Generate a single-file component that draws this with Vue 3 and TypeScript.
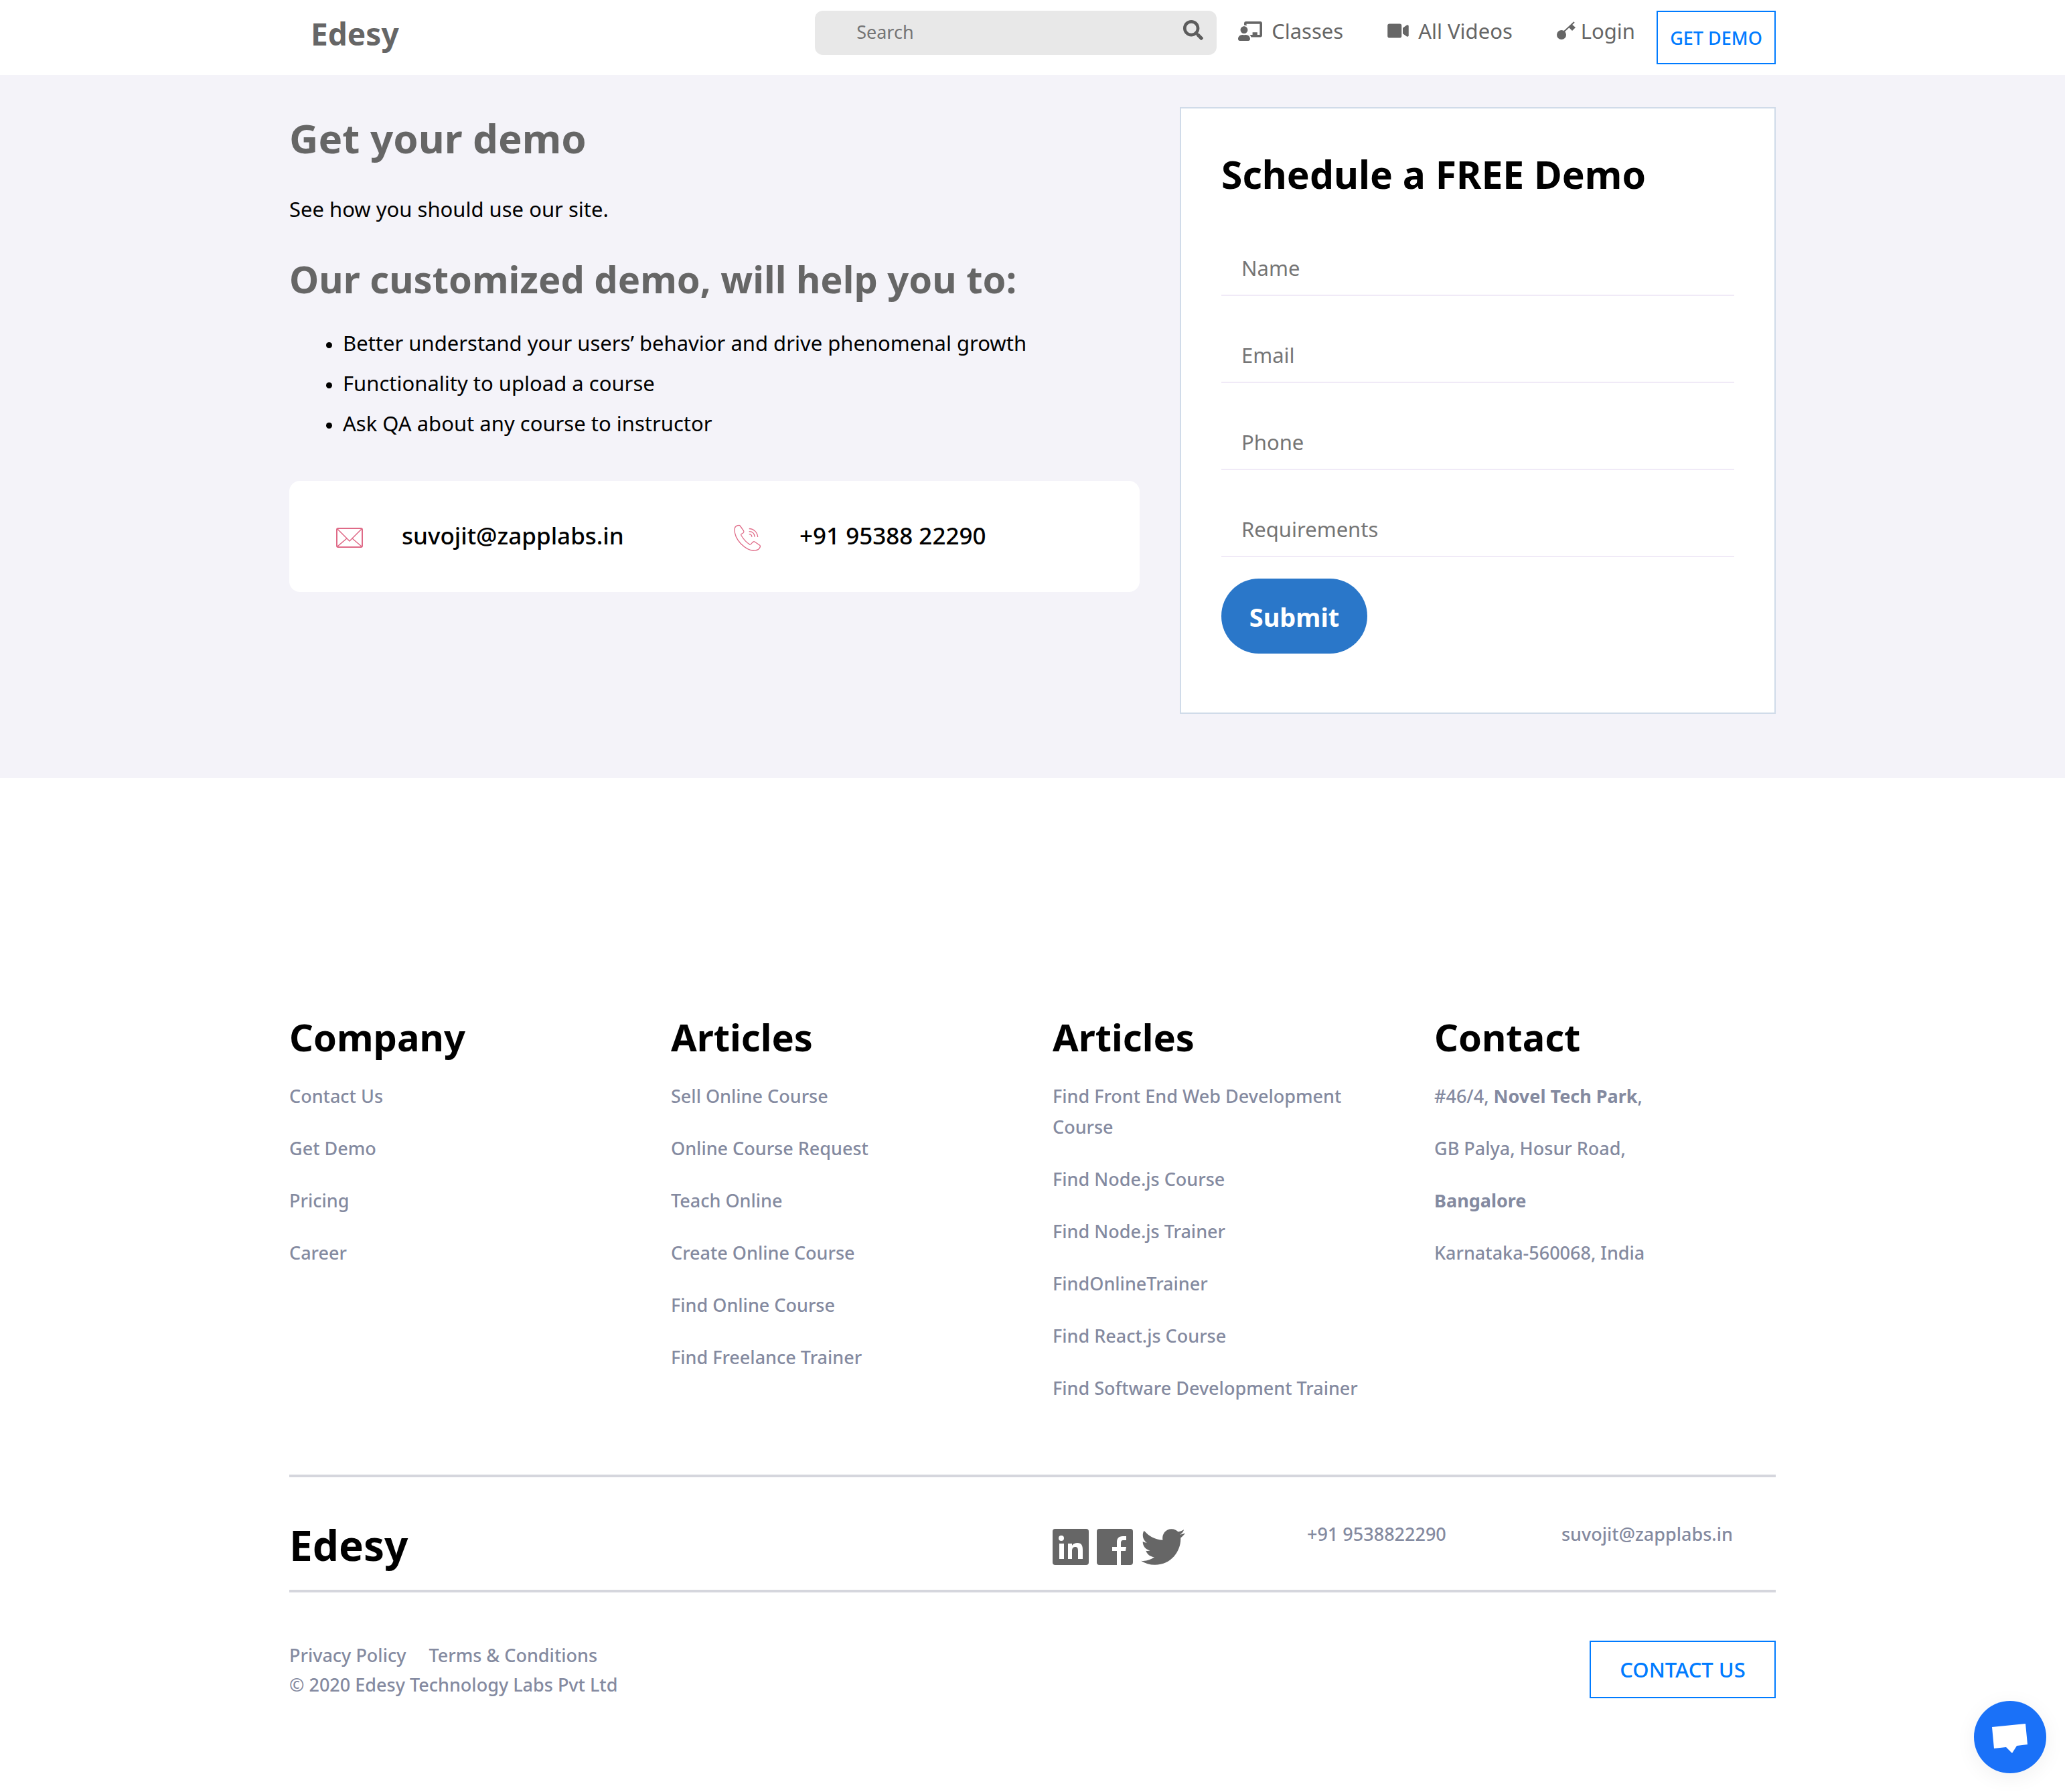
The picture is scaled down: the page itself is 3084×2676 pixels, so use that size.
<script setup lang="ts">
import { reactive, ref } from 'vue'

interface Field {
  key: 'name' | 'email' | 'phone' | 'requirements'
  label: string
  type: string
}

const search = ref('')
const form = reactive({ name: '', email: '', phone: '', requirements: '' })

const fields: Field[] = [
  { key: 'name', label: 'Name', type: 'text' },
  { key: 'email', label: 'Email', type: 'email' },
  { key: 'phone', label: 'Phone', type: 'tel' },
  { key: 'requirements', label: 'Requirements', type: 'text' },
]

const benefits: string[] = [
  'Better understand your users’ behavior and drive phenomenal growth',
  'Functionality to upload a course',
  'Ask QA about any course to instructor',
]

const linkColumns: { title: string; links: string[] }[] = [
  { title: 'Company', links: ['Contact Us', 'Get Demo', 'Pricing', 'Career'] },
  {
    title: 'Articles',
    links: [
      'Sell Online Course',
      'Online Course Request',
      'Teach Online',
      'Create Online Course',
      'Find Online Course',
      'Find Freelance Trainer',
    ],
  },
  {
    title: 'Articles',
    links: [
      'Find Front End Web Development Course',
      'Find Node.js Course',
      'Find Node.js Trainer',
      'FindOnlineTrainer',
      'Find React.js Course',
      'Find Software Development Trainer',
    ],
  },
]
</script>

<template>
  <div class="page">
    <header class="header">
      <div class="container header-row">
        <a class="brand" href="#">Edesy</a>
        <form class="search" role="search" @submit.prevent>
          <input v-model="search" type="text" placeholder="Search" aria-label="Search" />
          <button type="submit" aria-label="Search">
            <svg viewBox="0 0 512 512" width="30" height="30" fill="currentColor">
              <path d="M505 442.7L405.3 343c-4.5-4.500-10.6-7-17-7H372c27.600-35.300 44-79.700 44-128C416 93.100 322.900 0 208 0S0 93.100 0 208s93.100 208 208 208c48.300 0 92.700-16.400 128-44v16.300c0 6.400 2.500 12.500 7 17l99.700 99.700c9.400 9.400 24.600 9.400 33.900 0l28.300-28.300c9.400-9.400 9.400-24.600.1-34zM208 336c-70.700 0-128-57.200-128-128 0-70.700 57.200-128 128-128 70.700 0 128 57.200 128 128 0 70.700-57.200 128-128 128z" />
            </svg>
          </button>
        </form>
        <nav class="nav">
          <a href="#" class="nav-link">
            <svg viewBox="0 0 640 512" width="36" height="29" fill="currentColor">
              <path d="M208 352c-2.390 0-4.780.35-7.060 1.090C187.980 357.300 174.350 360 160 360c-14.350 0-27.980-2.700-40.950-6.910-2.280-.74-4.660-1.090-7.050-1.090C49.940 352-.33 402.480 0 464.620.14 490.880 21.730 512 48 512h224c26.270 0 47.860-21.120 48-47.380.33-62.140-49.940-112.620-112-112.620zm-48-32c53.020 0 96-42.980 96-96s-42.980-96-96-96-96 42.980-96 96 42.980 96 96 96zM592 0H208c-26.470 0-48 22.250-48 49.590V96c23.420 0 45.100 6.780 64 17.800V64h352v288h-64v-64H384v64h-76.240c19.100 16.690 33.120 38.730 39.690 64H592c26.470 0 48-22.250 48-49.590V49.590C640 22.250 618.470 0 592 0z" />
            </svg>
            Classes
          </a>
          <a href="#" class="nav-link">
            <svg viewBox="0 0 576 512" width="32" height="28" fill="currentColor">
              <path d="M336.200 64H47.800C21.400 64 0 85.400 0 111.800v288.400C0 426.600 21.400 448 47.800 448h288.400c26.400 0 47.800-21.400 47.800-47.800V111.800c0-26.400-21.400-47.800-47.800-47.800zm189.400 37.700L416 177.300v157.400l109.600 75.500c21.200 14.600 50.400-.3 50.400-25.800V127.500c0-25.400-29.100-40.400-50.400-25.800z" />
            </svg>
            All Videos
          </a>
          <a href="#" class="nav-link login">
            <svg viewBox="0 0 28 28" width="28" height="28" fill="currentColor">
              <circle cx="7" cy="20" r="7" />
              <path d="M11 15L26 1" fill="none" stroke="currentColor" stroke-width="2" />
              <path d="M22 4l6 5-5 5-5-5z" />
            </svg>
            Login
          </a>
        </nav>
        <button type="button" class="outline demo-button">GET DEMO</button>
      </div>
    </header>

    <main class="hero">
      <div class="container hero-grid">
        <section>
          <h1>Get your demo</h1>
          <p class="intro">See how you should use our site.</p>
          <h2>Our customized demo, will help you to:</h2>
          <ul class="benefits">
            <li v-for="item in benefits" :key="item">{{ item }}</li>
          </ul>
          <div class="contact-card">
            <a href="mailto:suvojit@zapplabs.in">
              <svg viewBox="0 0 42 42" width="42" height="42" fill="none" stroke="#df6a87" stroke-width="2">
                <rect x="1" y="6" width="38" height="28" rx="2" />
                <path d="M2 7l14 14 4 4 4-4L38 7M2 33l14-12M38 33L24 21" stroke-width="1.500" />
              </svg>
              suvojit@zapplabs.in
            </a>
            <a href="tel:+919538822290">
              <svg viewBox="0 0 42 42" width="42" height="42" fill="none" stroke="#df6a87" stroke-width="1.300">
                <path d="M7 1.500C3 2 1 5 1 8c0 8 4 15 9 20.500 5 5 12 10.500 19 10.500 4 0 7-1 8-2 2-2 3-4 2-5.500l-8-5.500c-2-1-3 0-5 3-1 1.500-2 1.500-3 .5-5-3-9-8-12-13-.8-1.500 0-2 1-2.500 3-1.500 3.500-2.500 2.500-4.500l-5-7c-.6-.8-1.500-1.200-2.500-1z" />
                <path d="M22.700 6.500c7 0 12.500 5.500 13 12.500M22.700 10.700c5 0 8 3 8.500 8M22.700 14.700c2.500 0 4 1.500 4.200 4" />
              </svg>
              +91 95388 22290
            </a>
          </div>
        </section>

        <form class="demo-form" @submit.prevent>
          <h2>Schedule a FREE Demo</h2>
          <div class="fields">
            <input
              v-for="field in fields"
              :key="field.key"
              v-model="form[field.key]"
              :type="field.type"
              :placeholder="field.label"
              :aria-label="field.label"
            />
          </div>
          <button type="submit" class="submit">Submit</button>
        </form>
      </div>
    </main>

    <footer class="container footer">
      <div class="columns">
        <section v-for="(column, index) in linkColumns" :key="index">
          <h2>{{ column.title }}</h2>
          <ul>
            <li v-for="link in column.links" :key="link"><a href="#">{{ link }}</a></li>
          </ul>
        </section>
        <section>
          <h2>Contact</h2>
          <address>
            <span>#46/4, <b>Novel Tech Park</b>,</span>
            <span>GB Palya, Hosur Road,</span>
            <span><b>Bangalore</b></span>
            <span>Karnataka-560068, India</span>
          </address>
        </section>
      </div>

      <div class="bar">
        <a class="footer-brand" href="#">Edesy</a>
        <div class="social">
          <a href="#" aria-label="LinkedIn">
            <svg viewBox="0 0 54 54" width="54" height="54">
              <path fill="#666" d="M4 0h46a4 4 0 0 1 4 4v46a4 4 0 0 1-4 4H4a4 4 0 0 1-4-4V4a4 4 0 0 1 4-4z" />
              <circle cx="13" cy="14" r="4" fill="#fff" />
              <path fill="#fff" d="M10 22h7v23h-7zM23 22h6v3c2-3 5-4 8-4 6 0 8 4 8 10v14h-7V33c0-4-1-6-4-6s-5 2-5 6v12h-6z" />
            </svg>
          </a>
          <a href="#" aria-label="Facebook">
            <svg viewBox="0 0 54 54" width="54" height="54">
              <path fill="#666" d="M4 0h46a4 4 0 0 1 4 4v46a4 4 0 0 1-4 4H36V33h7l1-6h-8v-5c0-4 1-5 4-5h4v-6h-5c-7 0-9 4-9 9v7h-7v6h7v21H4a4 4 0 0 1-4-4V4a4 4 0 0 1 4-4z" />
            </svg>
          </a>
          <a href="#" aria-label="Twitter">
            <svg viewBox="0 48 512 416" width="66" height="54" fill="#666">
              <path d="M459.370 151.716c.325 4.548.325 9.097.325 13.645 0 138.720-105.583 298.558-298.558 298.558-59.452 0-114.680-17.219-161.137-47.106 8.447.974 16.568 1.299 25.340 1.299 49.055 0 94.213-16.568 130.274-44.832-46.132-.975-84.792-31.188-98.112-72.772 6.498.974 12.995 1.624 19.818 1.624 9.421 0 18.843-1.300 27.614-3.573-48.081-9.747-84.143-51.980-84.143-102.985v-1.299c13.969 7.797 30.214 12.670 47.431 13.319-28.264-18.843-46.781-51.005-46.781-87.391 0-19.492 5.197-37.360 14.294-52.954 51.655 63.675 129.300 105.258 216.365 109.807-1.624-7.797-2.599-15.918-2.599-24.040 0-57.828 46.782-104.934 104.934-104.934 30.213 0 57.502 12.670 76.670 33.137 23.715-4.548 46.456-13.320 66.599-25.340-7.798 24.366-24.366 44.833-46.132 57.827 21.117-2.273 41.584-8.122 60.426-16.243-14.292 20.791-32.161 39.308-52.628 54.253z" />
            </svg>
          </a>
        </div>
        <a href="tel:+919538822290">+91 9538822290</a>
        <a href="mailto:suvojit@zapplabs.in">suvojit@zapplabs.in</a>
      </div>

      <div class="legal">
        <div>
          <div class="legal-links">
            <a href="#">Privacy Policy</a>
            <a href="#">Terms &amp; Conditions</a>
          </div>
          <div>© 2020 Edesy Technology Labs Pvt Ltd</div>
        </div>
        <button type="button" class="outline contact-button">CONTACT US</button>
      </div>
    </footer>

    <button type="button" class="chat" aria-label="Open chat">
      <svg viewBox="0 0 108 108" width="108" height="108">
        <path fill="#fff" d="M27 39l50-5 3 31-16 2-7 11-9-9-18 2z" />
      </svg>
    </button>
  </div>
</template>

<style>
body {
  margin: 0;
  background: #fff;
}
</style>

<style scoped>
.page {
  font-family: "Noto Sans", "Open Sans", sans-serif;
  font-size: 31px;
  color: #000;
}

.page * {
  box-sizing: border-box;
}

a {
  color: inherit;
  text-decoration: none;
}

button,
input {
  font-family: inherit;
}

svg {
  display: block;
  flex: none;
}

ul {
  margin: 0;
  padding: 0;
}

h1,
h2 {
  margin: 0;
  font-weight: 700;
}

.container {
  max-width: 2220px;
  margin: 0 auto;
}

.outline {
  background: #fff;
  color: #007bff;
  border: 2px solid #007bff;
  font-weight: 500;
  padding: 0;
}

/* Header */
.header-row {
  display: flex;
  align-items: flex-start;
  padding: 16px 0;
}

.brand {
  padding-left: 32px;
  margin-right: auto;
  font-size: 46px;
  line-height: 68px;
  font-weight: 700;
  color: #666;
}

.search {
  display: flex;
  align-items: center;
  width: 600px;
  height: 66px;
  padding-right: 20px;
  border-radius: 12px;
  background: #e8e8e8;
}

.search input {
  flex: 1;
  min-width: 0;
  height: 62px;
  padding: 0 0 0 62px;
  margin-bottom: 4px;
  border: 0;
  outline: 0;
  background: transparent;
  font-size: 27px;
}

.search button {
  padding: 0;
  margin-bottom: 8px;
  border: 0;
  background: transparent;
  color: #5c5c5c;
}

input::placeholder {
  color: #757575;
  opacity: 1;
}

.nav {
  display: flex;
  gap: 66px;
  padding: 0 32px;
}

.nav-link {
  display: flex;
  align-items: center;
  gap: 14px;
  line-height: 60px;
  color: #666;
}

.login {
  gap: 8px;
}

.demo-button {
  width: 178px;
  height: 80px;
  font-size: 27px;
}

/* Hero */
.hero {
  padding: 48px 0 96px;
  background: #f4f3f9;
}

.hero-grid {
  display: grid;
  grid-template-columns: 127fr 89fr;
  column-gap: 60px;
}

.hero section h1 {
  font-size: 60px;
  line-height: 92px;
  color: #666;
}

.intro {
  margin: 36px 0 40px;
  line-height: 48px;
}

h2 {
  font-size: 56px;
  line-height: 76px;
}

.hero section h2 {
  line-height: 80px;
  color: #666;
}

.benefits {
  margin: 26px 0 56px;
  padding-left: 80px;
  line-height: 60px;
}

.benefits li::marker {
  font-size: 26px;
}

.contact-card {
  display: grid;
  grid-template-columns: 1fr 1fr;
  padding: 56px 12px 58px 70px;
  border-radius: 16px;
  background: #fff;
}

.contact-card a {
  display: flex;
  align-items: center;
  gap: 56px;
  font-size: 35px;
  line-height: 52px;
  font-weight: 500;
}

.contact-card svg {
  margin-top: 8px;
}

.demo-form {
  padding: 60px 60px 88px;
  border: 2px solid #d0dbe9;
  background: #fff;
}

.demo-form h2 {
  font-size: 57px;
}

.fields {
  display: grid;
  gap: 48px;
  margin: 62px 0 32px;
}

.fields input {
  width: 100%;
  height: 82px;
  padding: 0 30px;
  border: 0;
  border-bottom: 2px solid #f0eaf7;
  outline: 0;
  background: transparent;
  font-size: 31px;
}

.submit {
  display: block;
  width: 218px;
  height: 112px;
  padding: 2px 0 0;
  border: 0;
  border-radius: 56px;
  background: #2a77c9;
  color: #fff;
  font-size: 38px;
  font-weight: 700;
}

/* Footer */
.footer {
  padding: 348px 0 140px;
  font-size: 27px;
  line-height: 46px;
  font-weight: 500;
  color: #848aa0;
}

.columns {
  display: grid;
  grid-template-columns: repeat(4, 1fr);
  column-gap: 60px;
}

.columns h2 {
  margin-bottom: 28px;
  color: #000;
}

.columns ul,
address {
  display: grid;
  gap: 32px;
  list-style: none;
  font-style: normal;
}

.bar {
  display: grid;
  grid-template-columns: 57fr 19fr 19fr 16fr;
  align-items: start;
  margin-top: 106px;
  padding: 62px 0 28px;
  border-top: 4px solid #d5d6dd;
  border-bottom: 4px solid #d5d6dd;
}

.footer-brand {
  font-size: 62px;
  line-height: 78px;
  font-weight: 700;
  color: #000;
}

.social {
  display: flex;
  gap: 12px;
  padding-top: 15px;
}

.legal {
  display: flex;
  justify-content: space-between;
  align-items: flex-start;
  padding-top: 72px;
  line-height: 44px;
}

.legal-links {
  display: flex;
  gap: 34px;
}

.contact-button {
  width: 278px;
  height: 86px;
  font-size: 31px;
}

.chat {
  position: fixed;
  right: 28px;
  bottom: 28px;
  width: 108px;
  height: 108px;
  padding: 0;
  border: 0;
  border-radius: 50%;
  background: #1a71f8;
  box-shadow: 0 6px 32px rgba(0, 0, 0, 0.06);
}
</style>
